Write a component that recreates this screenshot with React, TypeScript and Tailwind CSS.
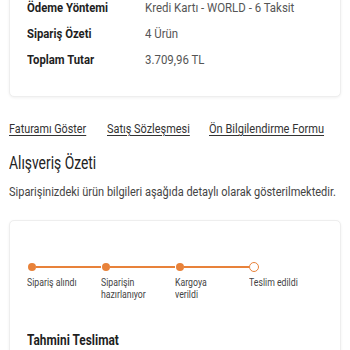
import React from "react";

const font = { fontFamily: 'Roboto, "Liberation Sans", sans-serif' };

function N({ children, className = "" }: { children: React.ReactNode; className?: string }) {
  return <span className={"inline-block origin-left whitespace-nowrap " + className}>{children}</span>;
}

function Row({ label, value }: { label: string; value: string }) {
  return (
    <div className="flex h-[26px] items-center">
      <div className="w-[118px] text-[13px] font-bold text-[#1f1f1f]"><N className="scale-x-[0.87]">{label}</N></div>
      <div className="text-[13px] text-[#555]"><N className="scale-x-[0.88]">{value}</N></div>
    </div>
  );
}

function Step({ lines, done, last }: { lines: string[]; done: boolean; last?: boolean }) {
  return (
    <div className="flex w-[74.3px] flex-col">
      <div className="flex h-[10px] items-center">
        {done ? (
          <div className="ml-[1px] h-[8px] w-[8px] shrink-0 rounded-full bg-[#e8823a]" />
        ) : (
          <div className="h-[10px] w-[10px] shrink-0 rounded-full border-[1.5px] border-[#e8823a] bg-white" />
        )}
        {!last && <div className="h-[2px] flex-1 bg-[#e8823a]" />}
      </div>
      <div className="mt-[5px] flex flex-col text-[10.5px] leading-[12px] text-[#444]">
        {lines.map((l) => (
          <N key={l} className="scale-x-[0.83]">{l}</N>
        ))}
      </div>
    </div>
  );
}

export default function App() {
  return (
    <div className="h-[350px] w-[350px] overflow-hidden bg-white" style={font}>
      <div className="mx-[9px] mt-[-30px] w-[332px] rounded-[5px] border border-[#eeeeee] bg-white px-[17px] pb-[23px] pt-[24px] shadow-[0_1px_3px_rgba(0,0,0,0.06)]">
        <Row label="Ödeme Yöntemi" value="Kredi Kartı - WORLD - 6 Taksit" />
        <Row label="Sipariş Özeti" value="4 Ürün" />
        <Row label="Toplam Tutar" value="3.709,96 TL" />
      </div>

      <div className="ml-[9px] mt-[24px] flex text-[13px] leading-[16px] text-[#333]">
        <div className="w-[98px]"><N className="scale-x-[0.83] underline underline-offset-2">Faturamı Göster</N></div>
        <div className="w-[102px]"><N className="scale-x-[0.84] underline underline-offset-2">Satış Sözleşmesi</N></div>
        <div className="w-[120px]"><N className="scale-x-[0.85] underline underline-offset-2">Ön Bilgilendirme Formu</N></div>
      </div>

      <div className="ml-[9px] mt-[15px] text-[18px] leading-[22px] text-[#222]"><N className="scale-x-[0.77]">Alışveriş Özeti</N></div>
      <div className="ml-[9px] mt-[10px] text-[12.5px] leading-[16px] text-[#444]">
        <N className="scale-x-[0.88]">Siparişinizdeki ürün bilgileri aşağıda detaylı olarak gösterilmektedir.</N>
      </div>

      <div className="mx-[9px] mt-[20px] h-[200px] w-[332px] rounded-[5px] border border-[#eeeeee] bg-white px-[17px] pt-[41px] shadow-[0_1px_3px_rgba(0,0,0,0.06)]">
        <div className="flex">
          <Step lines={["Sipariş alındı"]} done />
          <Step lines={["Siparişin", "hazırlanıyor"]} done />
          <Step lines={["Kargoya", "verildi"]} done />
          <Step lines={["Teslim edildi"]} done={false} last />
        </div>
        <div className="mt-[29px] text-[14px] font-bold text-[#1f1f1f]"><N className="scale-x-[0.85]">Tahmini Teslimat</N></div>
      </div>
    </div>
  );
}
